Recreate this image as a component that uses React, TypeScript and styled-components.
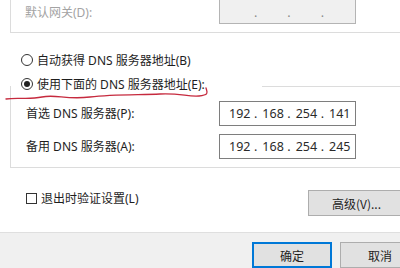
import React from 'react';
import styled, { createGlobalStyle } from 'styled-components';

const GlobalStyle = createGlobalStyle`
    html, body {
        margin: 0;
        padding: 0;
        background: #fff;
    }
    body {
        font-family: "Noto Sans", "Noto Sans CJK SC", sans-serif;
        font-size: 12px;
        color: #1e1e1e;
    }
`

const Page = styled.div`
    position: relative;
    width: 400px;
    height: 268px;
    overflow: hidden;
    background: #fff;
    display: flex;
    flex-direction: column;
`

const TopGroup = styled.div`
    margin-left: 10px;
    height: 34px;
    box-sizing: border-box;
    border-left: 1px solid #dcdcdc;
    border-bottom: 1px solid #dcdcdc;
    display: grid;
    grid-template-columns: 194px 137px;
    align-items: start;
    padding-left: 14px;
`

const FieldLabel = styled.span<{ $disabled?: boolean }>`
    line-height: 14px;
    margin-top: ${p => (p.$disabled ? '6px' : '0')};
    color: ${p => (p.$disabled ? '#a3a3a3' : '#1e1e1e')};
    white-space: nowrap;
`

const IpBox = styled.div<{ $disabled?: boolean }>`
    box-sizing: border-box;
    height: ${p => (p.$disabled ? '27px' : '25px')};
    margin-top: ${p => (p.$disabled ? '-3px' : '0')};
    border: 1px solid ${p => (p.$disabled ? '#b4b4b4' : '#7e7e7e')};
    background: ${p => (p.$disabled ? '#f0f0f0' : '#fff')};
    display: flex;
    align-items: center;
    padding-left: 9px;
    padding-top: ${p => (p.$disabled ? '3px' : '0')};
    font-family: "Noto Sans", sans-serif;
    font-size: 12.5px;
    color: ${p => (p.$disabled ? '#8a8a8a' : '#2a2a2a')};
`

const Octet = styled.span`
    width: 20px;
    text-align: center;
`

const Dot = styled.span`
    width: 13.33px;
    text-align: center;
`

const RadioRow = styled.label<{ $top: number }>`
    display: flex;
    align-items: center;
    height: 14px;
    margin-top: ${p => p.$top}px;
    padding-left: 21px;
    gap: 4px;
    white-space: nowrap;
`

const RadioCircle = styled.span<{ $checked?: boolean }>`
    width: 12px;
    height: 12px;
    box-sizing: border-box;
    border: 1px solid #333;
    border-radius: 50%;
    display: flex;
    align-items: center;
    justify-content: center;
    flex-shrink: 0;
    &::after {
        content: "";
        width: 6px;
        height: 6px;
        border-radius: 50%;
        background: ${p => (p.$checked ? '#222' : 'transparent')};
    }
`

const LegendLine = styled.span`
    flex: 1;
    align-self: flex-end;
    height: 1px;
    margin-bottom: 4px;
    margin-left: 53px;
    background: #dcdcdc;
`

const DnsGroup = styled.div`
    margin-left: 10px;
    margin-top: -5px;
    height: 84px;
    box-sizing: border-box;
    border-left: 1px solid #dcdcdc;
    border-bottom: 1px solid #dcdcdc;
    padding-top: 15px;
    display: flex;
    flex-direction: column;
    gap: 8px;
`

const DnsRow = styled.div`
    display: grid;
    grid-template-columns: 193px 137px;
    align-items: center;
    padding-left: 15px;
`

const ActionRow = styled.div`
    margin-top: 22px;
    height: 26px;
    display: flex;
    justify-content: space-between;
    align-items: flex-start;
    margin-right: -5px;
`

const CheckRow = styled.label`
    display: flex;
    align-items: center;
    gap: 4px;
    height: 14px;
    margin-top: 1px;
    padding-left: 26px;
`

const CheckBox = styled.span`
    width: 11px;
    height: 11px;
    box-sizing: border-box;
    border: 1px solid #333;
    background: #fff;
`

const Button = styled.button<{ $primary?: boolean; $width: number }>`
    box-sizing: border-box;
    width: ${p => p.$width}px;
    height: 26px;
    padding: 0;
    background: #e1e1e1;
    border: ${p => (p.$primary ? '2px solid #0078d7' : '1px solid #adadad')};
    font-family: "Noto Sans CJK SC", sans-serif;
    font-size: 12px;
    color: #1e1e1e;
`

const Footer = styled.div`
    margin-top: 16px;
    flex: 1;
    border-top: 1px solid #dfdfdf;
    background: #f0f0f0;
    display: flex;
    justify-content: flex-end;
    align-items: flex-start;
    gap: 8px;
    padding-top: 9px;
    margin-right: -20px;
`

const Annotation = styled.svg`
    position: absolute;
    left: 0;
    top: 0;
    pointer-events: none;
`

function IpAddress({ parts, disabled }: { parts: string[]; disabled?: boolean }) {
    return (
        <IpBox $disabled={disabled}>
            {parts.map((p, i) => (
                <React.Fragment key={i}>
                    {i > 0 && <Dot>.</Dot>}
                    <Octet>{p}</Octet>
                </React.Fragment>
            ))}
        </IpBox>
    )
}

export default function App() {
    return (
        <>
            <GlobalStyle />
            <Page>
                <TopGroup>
                    <FieldLabel $disabled>默认网关(D):</FieldLabel>
                    <IpAddress parts={['', '', '', '']} disabled />
                </TopGroup>

                <RadioRow $top={20}>
                    <RadioCircle />
                    <span>自动获得 DNS 服务器地址(B)</span>
                </RadioRow>
                <RadioRow $top={10}>
                    <RadioCircle $checked />
                    <span>使用下面的 DNS 服务器地址(E):</span>
                    <LegendLine />
                </RadioRow>

                <DnsGroup>
                    <DnsRow>
                        <FieldLabel>首选 DNS 服务器(P):</FieldLabel>
                        <IpAddress parts={['192', '168', '254', '141']} />
                    </DnsRow>
                    <DnsRow>
                        <FieldLabel>备用 DNS 服务器(A):</FieldLabel>
                        <IpAddress parts={['192', '168', '254', '245']} />
                    </DnsRow>
                </DnsGroup>

                <ActionRow>
                    <CheckRow>
                        <CheckBox />
                        <span>退出时验证设置(L)</span>
                    </CheckRow>
                    <Button $width={97}>高级(V)...</Button>
                </ActionRow>

                <Footer>
                    <Button $primary $width={80}>确定</Button>
                    <Button $width={80}>取消</Button>
                </Footer>

                <Annotation width="400" height="268" viewBox="0 0 400 268">
                    <path
                        d="M6 99 C 18 97, 28 100, 42 97 S 66 100, 90 97 S 140 95, 160 94 S 188 97, 199 96 S 207 92, 206 88"
                        fill="none"
                        stroke="#c62a3e"
                        strokeWidth="1.3"
                        strokeLinecap="round"
                    />
                </Annotation>
            </Page>
        </>
    )
}
